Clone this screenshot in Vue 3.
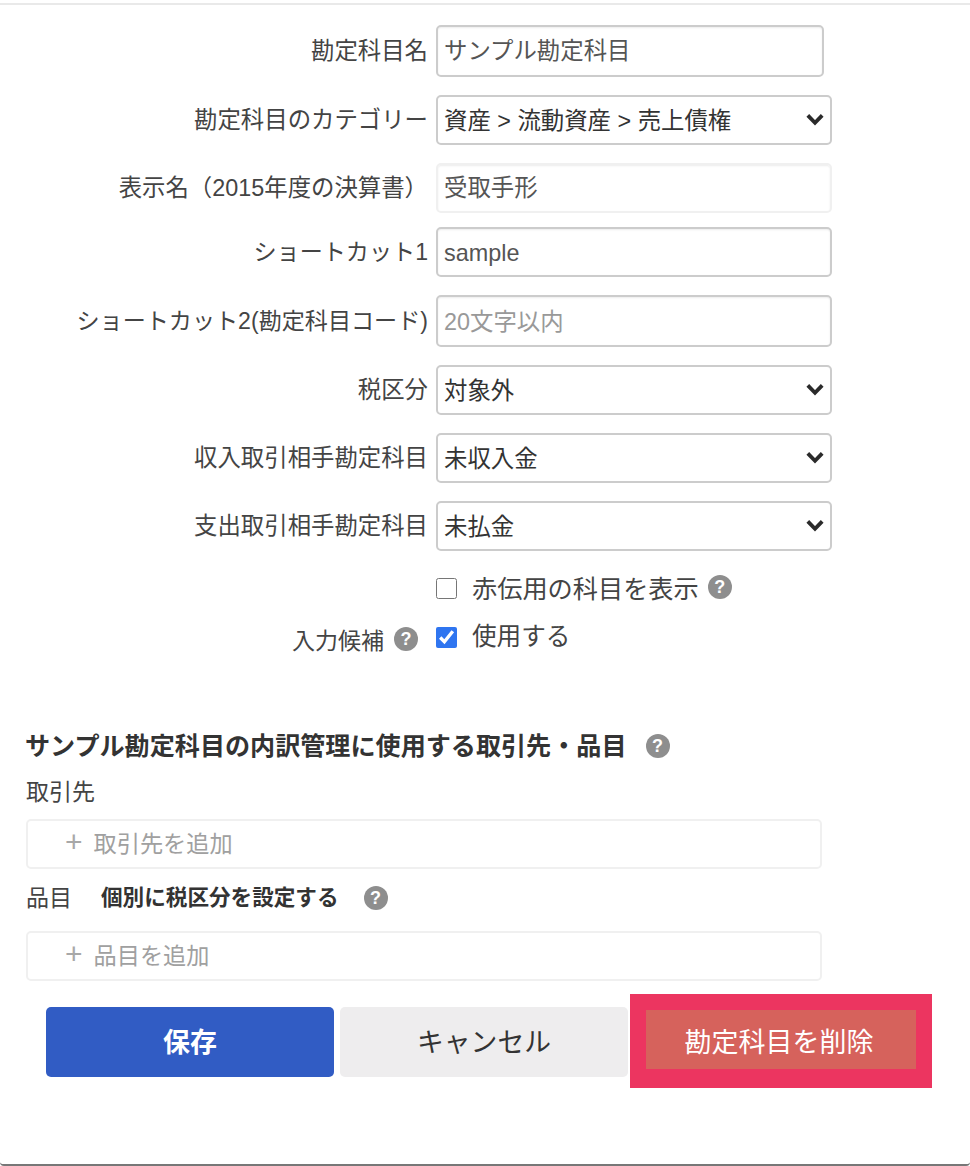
<template>
  <div class="page">
    <div class="dialog">
      <form class="account-form" @submit.prevent>
        <div v-for="field in fields" :key="field.label" class="form-row" :class="field.rowClass">
          <label class="row-label">{{ field.label }}</label>
          <div class="control" :class="field.controlClass">
            <template v-if="field.options">
              <select class="text-input select-input">
                <option v-for="opt in field.options" :key="opt">{{ opt }}</option>
              </select>
              <svg class="chevron" viewBox="0 0 18 13" aria-hidden="true">
                <path d="M1.8 2.4 L9 9.8 L16.2 2.4" />
              </svg>
            </template>
            <input
              v-else
              class="text-input"
              :class="field.inputClass"
              type="text"
              :value="field.value"
              :placeholder="field.placeholder"
            />
          </div>
        </div>

        <div class="check-row check-first">
          <div class="check-label"></div>
          <label class="check-item">
            <input v-model="showRed" class="check-box" type="checkbox" />
            <span>赤伝用の科目を表示</span>
          </label>
          <span class="help help-red">?</span>
        </div>
        <div class="check-row check-second">
          <div class="check-label">
            <span>入力候補</span>
            <span class="help">?</span>
          </div>
          <label class="check-item">
            <input v-model="useSuggest" class="check-box" type="checkbox" />
            <span class="check-text-up">使用する</span>
          </label>
        </div>

        <section class="breakdown">
          <h3 class="breakdown-title">
            サンプル勘定科目の内訳管理に使用する取引先・品目
            <span class="help">?</span>
          </h3>
          <div class="sub-label">取引先</div>
          <div class="add-box"><span class="plus">+</span><span>取引先を追加</span></div>
          <div class="sub-label item-label">
            <span>品目</span>
            <strong>個別に税区分を設定する</strong>
            <span class="help">?</span>
          </div>
          <div class="add-box"><span class="plus">+</span><span>品目を追加</span></div>
        </section>

        <div class="actions">
          <button class="btn btn-save" type="button">保存</button>
          <button class="btn btn-cancel" type="button">キャンセル</button>
          <button class="btn btn-delete" type="button">勘定科目を削除</button>
        </div>
      </form>
    </div>
  </div>
</template>

<script setup>
import { ref } from 'vue'

const showRed = ref(false)
const useSuggest = ref(true)

const fields = [
  { label: '勘定科目名', value: 'サンプル勘定科目', controlClass: 'short tall', inputClass: 'nudge-up' },
  { label: '勘定科目のカテゴリー', options: ['資産 > 流動資産 > 売上債権'] },
  { label: '表示名（2015年度の決算書）', value: '受取手形', inputClass: 'soft nudge-up', rowClass: 'tight' },
  { label: 'ショートカット1', value: 'sample', inputClass: 'nudge-down', rowClass: 'kana-label' },
  { label: 'ショートカット2(勘定科目コード)', placeholder: '20文字以内', controlClass: 'tall', inputClass: 'nudge-down', rowClass: 'kana-label' },
  { label: '税区分', options: ['対象外'] },
  { label: '収入取引相手勘定科目', options: ['未収入金'] },
  { label: '支出取引相手勘定科目', options: ['未払金'] }
]
</script>

<style>
html,
body {
  margin: 0;
  background: #fff;
}
</style>

<style scoped>
.page {
  height: 1166px;
  padding-top: 3px;
  box-sizing: border-box;
  display: flex;
  flex-direction: column;
  font-family: "Liberation Sans", "Noto Sans CJK JP", sans-serif;
  color: #444;
  background: #fff;
}

.dialog {
  flex: 1;
  border-top: 2px solid #e9e9e9;
  border-bottom: 2px solid #777;
  border-radius: 0 0 4px 4px;
  box-sizing: border-box;
}

.account-form {
  padding-top: 20px;
}

.form-row {
  display: flex;
  align-items: center;
  margin-bottom: 18px;
}

.form-row.tight {
  margin-bottom: 14px;
}

.row-label {
  width: 428px;
  flex: none;
  text-align: right;
  font-size: 23.4px;
  line-height: 30px;
  white-space: nowrap;
  margin-top: -1px;
}

.kana-label .row-label {
  font-size: 23.1px;
}

.control {
  position: relative;
  width: 396px;
  height: 50px;
  margin-left: 8px;
}

.control.short {
  width: 388px;
}

.control.tall {
  height: 52px;
}

.text-input {
  width: 100%;
  height: 100%;
  box-sizing: border-box;
  padding: 0 6px;
  border: 2px solid #ccc;
  border-radius: 5px;
  background: #fff;
  font-family: inherit;
  font-size: 23.4px;
  color: #555;
  outline: none;
  box-shadow: inset 0 1px 2px rgba(0, 0, 0, 0.08);
}

.text-input.soft {
  border-color: #f0f0f0;
}

.text-input.nudge-up {
  padding-bottom: 4px;
}

.text-input.nudge-down {
  padding-top: 3px;
}

.text-input::placeholder {
  color: #999;
  opacity: 1;
}

.select-input {
  appearance: none;
  -webkit-appearance: none;
  padding: 2px 6px 0;
  color: #333;
  box-shadow: none;
}

.chevron {
  position: absolute;
  right: 8px;
  top: 18px;
  width: 18px;
  height: 13px;
  pointer-events: none;
}

.chevron path {
  fill: none;
  stroke: #2b2b2b;
  stroke-width: 3.8;
}

.check-row {
  display: flex;
  align-items: center;
}

.check-first {
  margin-top: 24px;
  height: 24px;
}

.check-second {
  margin-top: 24px;
  height: 26px;
}

.check-label {
  width: 428px;
  flex: none;
  display: flex;
  justify-content: flex-end;
  align-items: center;
  gap: 10px;
  padding-right: 10px;
  box-sizing: border-box;
  font-size: 23px;
  position: relative;
  top: 3px;
}

.check-item {
  display: flex;
  align-items: center;
  gap: 15px;
  margin-left: 8px;
  font-size: 25.2px;
  color: #444;
}

.check-text-up {
  position: relative;
  top: -2px;
  font-size: 24.6px;
}

.check-box {
  width: 21px;
  height: 21px;
  margin: 2px 0 0;
  accent-color: #2f75f0;
}

.help {
  display: inline-flex;
  align-items: center;
  justify-content: center;
  flex: none;
  width: 24px;
  height: 24px;
  border-radius: 50%;
  background: #8e8e8e;
  color: #fff;
  font-size: 18px;
  font-weight: 700;
  line-height: 1;
}

.help-red {
  margin-left: 9px;
}

.breakdown {
  margin-top: 82px;
  padding-left: 26px;
}

.breakdown-title {
  margin: 0 0 0 -1px;
  display: flex;
  align-items: center;
  gap: 19px;
  font-size: 25.1px;
  line-height: 30px;
  font-weight: 700;
  color: #333;
}

.sub-label {
  margin-top: 15px;
  font-size: 23px;
  line-height: 32px;
  color: #444;
}

.add-box {
  width: 796px;
  height: 50px;
  box-sizing: border-box;
  margin-top: 11px;
  padding: 0 0 4px 37px;
  display: flex;
  align-items: center;
  gap: 11px;
  border: 2px solid #f0f0f0;
  border-radius: 5px;
  font-size: 23.2px;
  color: #a0a0a0;
}

.plus {
  font-size: 30px;
  font-weight: 400;
  line-height: 1;
  color: #a8a8a8;
}

.item-label {
  display: flex;
  align-items: center;
  margin-top: 13px;
  margin-bottom: 17px;
}

.item-label strong {
  margin-left: 29px;
  font-size: 21.6px;
  color: #333;
}

.item-label .help {
  margin-left: 25px;
}

.actions {
  display: flex;
  align-items: flex-start;
  gap: 6px;
  margin-top: 13px;
  padding-left: 46px;
}

.btn {
  width: 288px;
  height: 70px;
  margin-top: 13px;
  padding: 0 0 4px;
  border: none;
  border-radius: 5px;
  font-family: inherit;
  font-size: 26.8px;
  cursor: pointer;
}

.btn-save {
  background: #315cc4;
  color: #fff;
  font-weight: 700;
  font-size: 27px;
}

.btn-cancel {
  background: #eeedee;
  color: #333;
}

.btn-delete {
  width: 302px;
  height: 94px;
  margin: 0 0 0 -4px;
  padding: 2px 4px 0 0;
  border-style: solid;
  border-color: #ec3560;
  border-width: 16px 16px 19px;
  border-radius: 0;
  background: #d6625c;
  color: #fff;
  font-size: 27px;
}
</style>
